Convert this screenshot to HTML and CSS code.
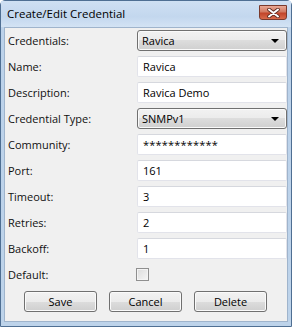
FILE: index.html
```html
<!DOCTYPE html>
<html lang="en">
<head>
  <meta charset="UTF-8">
  <title>Create/Edit Credential</title>
  <link rel="stylesheet" href="styles.css">
</head>
<body>
<div class="window">
  <div class="titlebar">
    <span class="title">Create/Edit Credential</span>
    <span class="close">
      <svg width="13" height="10" viewBox="0 0 13 10">
        <path d="M2 1.5 L11 8.5 M11 1.5 L2 8.5" stroke="#5a2a20" stroke-width="3.6" stroke-linecap="round"/>
        <path d="M2 1.5 L11 8.5 M11 1.5 L2 8.5" stroke="#fff" stroke-width="2" stroke-linecap="round"/>
      </svg>
    </span>
  </div>
  <div class="client">
    <div class="form">
      <label>Credentials:</label>
      <div class="combo"><span>Ravica</span><i class="arrow"></i></div>

      <label>Name:</label>
      <div class="text">Ravica</div>

      <label>Description:</label>
      <div class="text">Ravica Demo</div>

      <label>Credential Type:</label>
      <div class="combo"><span>SNMPv1</span><i class="arrow"></i></div>

      <label>Community:</label>
      <div class="text pass">************</div>

      <label>Port:</label>
      <div class="text">161</div>

      <label>Timeout:</label>
      <div class="text">3</div>

      <label>Retries:</label>
      <div class="text">2</div>

      <label>Backoff:</label>
      <div class="text">1</div>

      <label>Default:</label>
      <div class="check-cell"><span class="check"></span></div>
    </div>
    <div class="buttons">
      <button>Save</button>
      <button>Cancel</button>
      <button>Delete</button>
    </div>
  </div>
</div>
</body>
</html>
```
FILE: styles.css
```css
* {
  margin: 0;
  padding: 0;
  box-sizing: border-box;
}
body {
  width: 292px;
  height: 327px;
  font-family: "Open Sans", "Noto Sans", sans-serif;
  font-size: 11px;
  color: #000;
  background: #fff;
}
.window {
  width: 292px;
  height: 327px;
  border: 1px solid #4f6f93;
  border-radius: 5px 5px 0 0;
  background: linear-gradient(#c9dcf1, #bcd2ea 30px, #bdd3ea);
  display: flex;
  flex-direction: column;
}
.titlebar {
  height: 26px;
  display: flex;
  align-items: center;
  justify-content: space-between;
  padding: 0 4px 0 6px;
  background: linear-gradient(#cfe0f3, #c3d7ee 60%, #d3e3f4);
}
.title {
  font-size: 11.5px;
  color: #000;
  margin-top: -2px;
}
.close {
  width: 28px;
  height: 15px;
  margin-top: -3px;
  border: 1px solid #7a3a2c;
  border-radius: 0 0 3px 3px;
  background: linear-gradient(#e8a895, #d27a62 45%, #c2452a 55%, #d86a4a);
  display: flex;
  align-items: center;
  justify-content: center;
}
.client {
  flex: 1;
  margin: 0 3px 4px 3px;
  background: #f0f0f0;
  border: 1px solid #9fb4cc;
  padding: 2px 0 0 3px;
}
.form {
  display: grid;
  grid-template-columns: 129px 150px;
  grid-auto-rows: 21px;
  row-gap: 5px;
  align-items: center;
}
.form label {
  font-size: 11px;
  color: #111;
}
.text {
  height: 21px;
  background: #fff;
  border: 1px solid #e2e3ea;
  border-top-color: #d6d8de;
  border-radius: 2px;
  padding: 0 5px;
  line-height: 19px;
}
.pass {
  letter-spacing: 0.2px;
}
.combo {
  height: 21px;
  border: 1px solid #707070;
  border-radius: 3px;
  background: linear-gradient(#f2f2f2, #ebebeb 50%, #dddddd 50%, #cfcfcf);
  box-shadow: inset 0 0 0 1px #fafafa;
  display: flex;
  align-items: center;
  justify-content: space-between;
  padding: 0 7px 0 4px;
}
.arrow {
  width: 0;
  height: 0;
  border-left: 4px solid transparent;
  border-right: 4px solid transparent;
  border-top: 4px solid #000;
}
.check-cell {
  display: flex;
  align-items: center;
}
.check {
  width: 13px;
  height: 13px;
  margin-left: -1px;
  border: 1px solid #8f8f8f;
  background: linear-gradient(135deg, #dcdcdc, #f6f6f6);
  box-shadow: inset 0 0 0 1px #f4f4f4;
}
.buttons {
  display: flex;
  gap: 12px;
  padding: 6px 0 0 16px;
}
.buttons button {
  width: 73px;
  height: 21px;
  font-family: inherit;
  font-size: 11px;
  color: #000;
  border: 1px solid #707070;
  border-radius: 3px;
  background: linear-gradient(#f2f2f2, #ebebeb 50%, #dddddd 50%, #cfcfcf);
  box-shadow: inset 0 0 0 1px #fafafa;
}
```
